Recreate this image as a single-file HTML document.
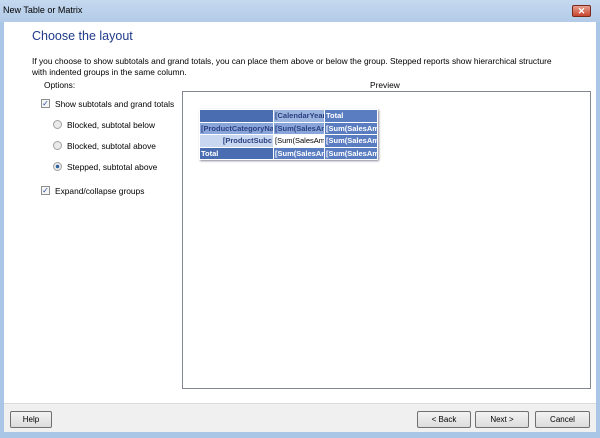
<!DOCTYPE html>
<html><head><style>
*{margin:0;padding:0;box-sizing:border-box}
body{width:600px;height:438px;overflow:hidden;background:#a9c6e6;font-family:"Liberation Sans",sans-serif;position:relative}
.title{position:absolute;left:0;top:0;width:600px;height:22px;background:linear-gradient(#c5d9ef,#b3cbe8);font-size:9px;color:#000;padding:5px 0 0 3px}
.close{position:absolute;left:572px;top:5px;width:19px;height:12px;background:linear-gradient(#e6a090,#c8452f);border:1px solid #7a2a1a;border-radius:2px;color:#fff;font-size:9px;text-align:center;line-height:10px;font-weight:bold}
.client{position:absolute;left:4px;top:22px;width:592px;height:381px;background:#fff}
.footer{position:absolute;left:4px;top:403px;width:592px;height:29px;background:#f0f0f0;border-top:1px solid #dcdcdc}
.t{position:absolute;font-size:8.4px;color:#000;white-space:nowrap}
.h1{position:absolute;left:32px;top:29px;font-size:12.5px;color:#1e3a8a}
.preview{position:absolute;left:182px;top:91px;width:409px;height:298px;border:1px solid #828790;background:#fff}
.btn{position:absolute;top:411px;height:17px;border:1px solid #707070;border-radius:2px;background:linear-gradient(#f3f3f3,#dcdcdc);font-size:8px;text-align:center;line-height:15px}
.cb{position:absolute;width:9px;height:9px;border:1px solid #8e8f8f;background:#f4f4f4;font-size:8px;line-height:7px;text-align:center;color:#2a4f9c}
.rd{position:absolute;width:9px;height:9px;border:1px solid #a0a0a0;border-radius:50%;background:#eaeaea}
table{position:absolute;left:199px;top:109px;width:178px;table-layout:fixed;border-collapse:collapse;font-size:7.5px;font-weight:bold;border:1px solid #2c3e6a;box-shadow:1px 1px 2px #889}
td{height:12.5px;padding:0 1px;white-space:nowrap;overflow:hidden;border:1px solid #fff}
</style></head><body>
<div class="title">New Table or Matrix</div>
<div class="close">✕</div>
<div class="client"></div>
<div class="h1">Choose the layout</div>
<div class="t" style="left:32px;top:56px">If you choose to show subtotals and grand totals, you can place them above or below the group. Stepped reports show hierarchical structure</div>
<div class="t" style="left:32px;top:67px">with indented groups in the same column.</div>
<div class="t" style="left:44px;top:80px">Options:</div>
<div class="t" style="left:370px;top:80px">Preview</div>
<div class="cb" style="left:41px;top:99px">✓</div><div class="t" style="left:55px;top:99px">Show subtotals and grand totals</div>
<div class="rd" style="left:53px;top:120px"></div><div class="t" style="left:67px;top:120px">Blocked, subtotal below</div>
<div class="rd" style="left:53px;top:141px"></div><div class="t" style="left:67px;top:141px">Blocked, subtotal above</div>
<div class="rd" style="left:53px;top:162px;background:radial-gradient(#2a5fa0 30%,#eaeaea 40%)"></div><div class="t" style="left:67px;top:162px">Stepped, subtotal above</div>
<div class="cb" style="left:41px;top:186px">✓</div><div class="t" style="left:55px;top:186px">Expand/collapse groups</div>
<div class="preview"></div>
<table>
<colgroup><col style="width:74px"><col style="width:51px"><col style="width:53px"></colgroup>
<tr><td style="background:#4a6cb0"></td><td style="background:#9bb3df;color:#2a4080">[CalendarYear]</td><td style="background:#5a7cc0;color:#fff">Total</td></tr>
<tr><td style="background:#8aa5da;color:#2a4080">[ProductCategoryName]</td><td style="background:#8aa5da;color:#2a4080">[Sum(SalesAmount)]</td><td style="background:#5a7cc0;color:#fff">[Sum(SalesAmount)]</td></tr>
<tr><td style="background:#c9d7f1;color:#2a4080;text-align:right">[ProductSubc</td><td style="background:#fff;color:#000;font-weight:normal">[Sum(SalesAmount)]</td><td style="background:#5a7cc0;color:#fff">[Sum(SalesAmount)]</td></tr>
<tr><td style="background:#4a6cb0;color:#fff">Total</td><td style="background:#5a7cc0;color:#fff">[Sum(SalesAmount)]</td><td style="background:#5a7cc0;color:#fff">[Sum(SalesAmount)]</td></tr>
</table>
<div class="footer"></div>
<div class="btn" style="left:10px;width:42px">Help</div>
<div class="btn" style="left:417px;width:54px">&lt; Back</div>
<div class="btn" style="left:475px;width:54px">Next &gt;</div>
<div class="btn" style="left:535px;width:55px">Cancel</div>
</body></html>
